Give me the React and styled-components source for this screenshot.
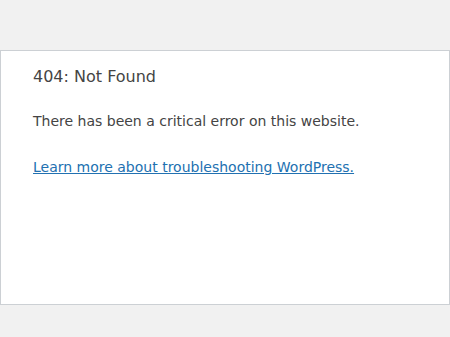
import styled, { createGlobalStyle } from "styled-components"

const Global = createGlobalStyle`
html, body {
  margin:0;
  padding:0;
  background:#f1f1f1;
}
body {
  font-family:"DejaVu Sans", sans-serif;
}
`

const Page = styled.div`
box-sizing:border-box;
margin-top:50px;
width:450px;
height:255px;
background:#fff;
border:1px solid #ccd0d4;
padding:14px 32px 0 32px;
color:#444;
`

const Title = styled.h1`
margin:0;
font-size:16px;
font-weight:normal;
line-height:24px;
color:#444;
`

const Text = styled.p`
margin:${(p) => p.$top}px 0 0;
font-size:14px;
line-height:21px;
`

const Link = styled.a`
color:#2271b1;
text-decoration:underline;
`

const App = () => {
    return <>
        <Global />
        <Page>
            <Title>404: Not Found</Title>
            <Text $top={22}>There has been a critical error on this website.</Text>
            <Text $top={25}>
                <Link href="#">Learn more about troubleshooting WordPress.</Link>
            </Text>
        </Page>
    </>
}

export default App
